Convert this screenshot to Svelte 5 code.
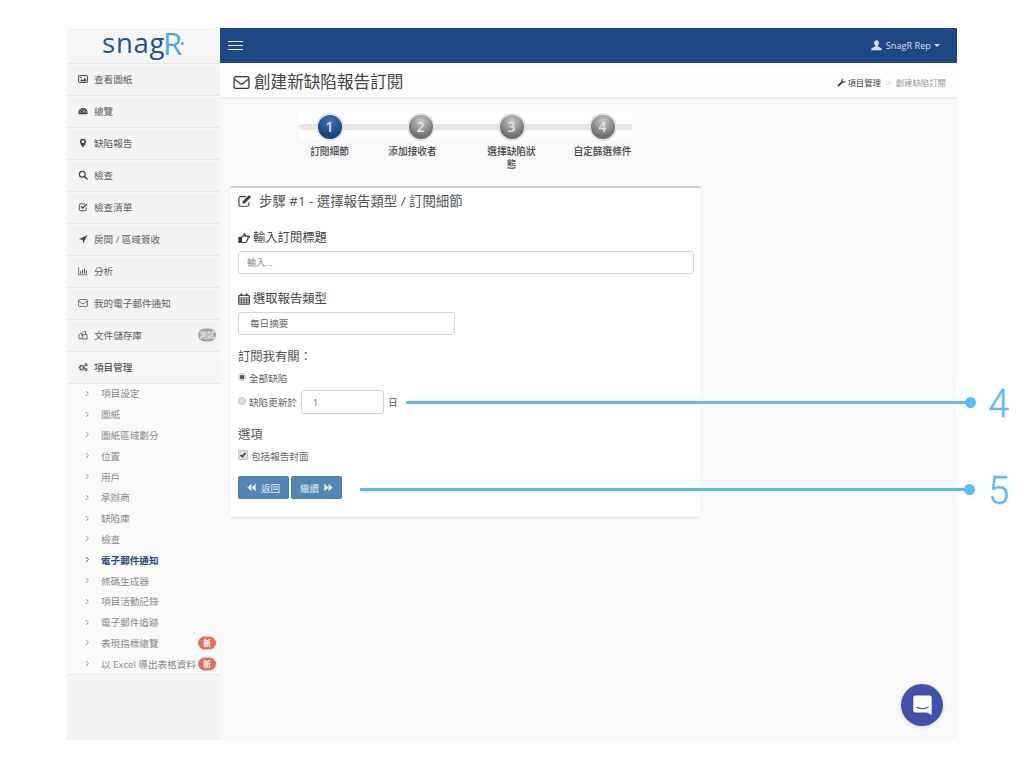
<script>
  const main = [
    { label: '查看圖紙', icon: 'image' },
    { label: '總覽', icon: 'gauge' },
    { label: '缺陷報告', icon: 'pin' },
    { label: '檢查', icon: 'search' },
    { label: '檢查清單', icon: 'check' },
    { label: '房間 / 區域簽收', icon: 'arrow' },
    { label: '分析', icon: 'chart' },
    { label: '我的電子郵件通知', icon: 'mail' },
    { label: '文件儲存庫', icon: 'files', beta: true },
    { label: '項目管理', icon: 'gears', dark: true }
  ];
  const sub = [
    { label: '項目設定' }, { label: '圖紙' }, { label: '圖紙區域劃分' }, { label: '位置' },
    { label: '用戶' }, { label: '承辦商' }, { label: '缺陷庫' }, { label: '檢查' },
    { label: '電子郵件通知', active: true }, { label: '條碼生成器' }, { label: '項目活動記錄' },
    { label: '電子郵件追跡' }, { label: '表現指標總覽', isNew: true }, { label: '以 Excel 導出表格資料', isNew: true }
  ];
  const steps = ['訂閱細節', '添加接收者', '選擇缺陷狀態', '自定篩選條件'];
</script>

{#snippet icon(name)}
  <svg class="ic" viewBox="0 0 16 16" aria-hidden="true">
    {#if name === 'image'}
      <rect x="1" y="2.500" width="14" height="11" rx="1" fill="none" stroke="currentColor" stroke-width="1.600"/>
      <path d="M3 11.500 6 8l2 2 3-3.500 2.200 2.200v2.800z" fill="currentColor"/><circle cx="4.600" cy="5.600" r="1.300" fill="currentColor"/>
    {:else if name === 'gauge'}
      <path d="M8 3a7.400 7.400 0 0 0-7.400 7.400c0 1 .2 1.900.6 2.600h13.600c.4-.7.6-1.600.6-2.600A7.400 7.400 0 0 0 8 3z" fill="currentColor"/>
      <path d="M8 11 10.500 6" stroke="#f5f5f5" stroke-width="1.400"/><circle cx="3.500" cy="9.500" r="1" fill="#f5f5f5"/><circle cx="6" cy="6" r="1" fill="#f5f5f5"/><circle cx="12.700" cy="9.500" r="1" fill="#f5f5f5"/>
    {:else if name === 'pin'}
      <path d="M8 1a4.800 4.800 0 0 0-4.800 4.800C3.200 9 8 15 8 15s4.800-6 4.800-9.200A4.800 4.800 0 0 0 8 1z" fill="currentColor"/><circle cx="8" cy="5.800" r="2.200" fill="#f5f5f5"/>
    {:else if name === 'search'}
      <circle cx="6.800" cy="6.800" r="4.600" fill="none" stroke="currentColor" stroke-width="2"/><path d="m10.300 10.300 4.200 4.200" stroke="currentColor" stroke-width="2.400" stroke-linecap="round"/>
    {:else if name === 'check'}
      <path d="M13 9v3a2 2 0 0 1-2 2H4a2 2 0 0 1-2-2V5a2 2 0 0 1 2-2h7" fill="none" stroke="currentColor" stroke-width="1.500"/><path d="m4.800 7 2.700 2.700L14.500 3" fill="none" stroke="currentColor" stroke-width="2"/>
    {:else if name === 'arrow'}
      <path d="M15 1.500 1.500 8.500l6 .5.800 6z" fill="currentColor"/>
    {:else if name === 'chart'}
      <path d="M1 2v12h14" fill="none" stroke="currentColor" stroke-width="1.100"/><path d="M3.500 8.500h1.500V12H3.500zM6.500 6h1.500v6H6.500zM9.500 4h1.500v8H9.500zM12.500 7h1.500v5h-1.500z" fill="currentColor"/>
    {:else if name === 'mail'}
      <rect x="1" y="2.500" width="14" height="11" rx="1.500" fill="none" stroke="currentColor" stroke-width="1.200"/><path d="m1.500 5 5 3.800q1.500 1 3 0l5-3.800" fill="none" stroke="currentColor" stroke-width="1.200"/>
    {:else if name === 'files'}
      <path d="M6 5.500 9 2.500h3v4M6 5.500v3h2M6 5.500H4L1.500 8v6H7" fill="none" stroke="currentColor" stroke-width="1.200"/><path d="M7.500 7h7v7.500h-7z" fill="none" stroke="currentColor" stroke-width="1.200"/>
    {:else if name === 'gears'}
      <circle cx="6" cy="9" r="3.300" fill="none" stroke="currentColor" stroke-width="3" stroke-dasharray="2 .8"/><circle cx="12.800" cy="4.500" r="1.800" fill="none" stroke="currentColor" stroke-width="1.600"/><circle cx="12.800" cy="12.200" r="1.800" fill="none" stroke="currentColor" stroke-width="1.600"/>
    {:else if name === 'edit'}
      <path d="M12.500 9.500V12a2 2 0 0 1-2 2H3a2 2 0 0 1-2-2V5a2 2 0 0 1 2-2h6" fill="none" stroke="currentColor" stroke-width="1.300"/><path d="m5.500 8 7-7 2.500 2.500-7 7-3.200.7z" fill="currentColor"/>
    {:else if name === 'hand'}
      <path d="M4.500 7 8 4.500V2.500c1.800-.4 2.200 1.300 1.500 3h4.500c1.600 0 1.600 2.400 0 2.500h-1c.6 1.200 0 2.200-.6 2.300.2 1.100-.2 1.800-.8 2 0 1-.6 1.700-1.600 1.700H7.500c-1 0-1.800-.6-3-.8z" fill="none" stroke="currentColor" stroke-width="1.400"/><rect x=".5" y="6.500" width="4" height="8" fill="currentColor"/>
    {:else if name === 'calendar'}
      <rect x="1" y="3" width="14" height="12" rx="1" fill="none" stroke="currentColor" stroke-width="1.400"/><path d="M1 6.500h14M1 9.300h14M1 12.200h14M4.500 6.500v8M8 6.500v8M11.500 6.500v8" stroke="currentColor" stroke-width="1"/><path d="M4.500 .5v3.500M11.500 .5v3.500" stroke="currentColor" stroke-width="2"/>
    {:else if name === 'user'}
      <path d="M8 .5c-2.200 0-3.500 1.700-3.500 3.800 0 1.500.6 2.900 1.700 3.700v1.200L.5 12.300V15h15v-2.700L9.800 9.200V8c1.100-.8 1.700-2.200 1.700-3.700C11.500 2.200 10.200.5 8 .5z" fill="currentColor"/>
    {:else if name === 'wrench'}
      <path d="M15 4.300a4 4 0 0 1-5.300 4.200L3.800 14.500a1.500 1.500 0 0 1-2.200-2.200l6-6A4 4 0 0 1 11.800 1L9.500 3.300 10 6l2.700.5z" fill="currentColor"/>
    {:else if name === 'back'}
      <path d="M8 1.500v13L.5 8zM15.500 1.500v13L8 8z" fill="currentColor"/>
    {:else if name === 'next'}
      <path d="M.5 1.500v13L8 8zM8 1.500v13L15.500 8z" fill="currentColor"/>
    {/if}
  </svg>
{/snippet}

<div class="page">
  <div class="frame">
    <aside class="side">
      <div class="logo"><span class="snag">snag</span><span class="r">R</span><i class="rdot"></i></div>
      {#each main as m}
        <div class="item" class:dark={m.dark}>
          <span class="item-ic">{@render icon(m.icon)}</span>
          <span>{m.label}</span>
          {#if m.beta}<span class="pill beta">測試</span>{/if}
        </div>
      {/each}
      <div class="subs">
        {#each sub as s}
          <div class="sub" class:active={s.active}>
            <svg class="chev" viewBox="0 0 6 8"><path d="m1.200 1 3 3-3 3" fill="none" stroke="currentColor" stroke-width="1"/></svg>
            <span>{s.label}</span>
            {#if s.isNew}<span class="pill new">新</span>{/if}
          </div>
        {/each}
      </div>
    </aside>

    <div class="right">
      <header class="top">
        <div class="burger"><i></i><i></i><i></i></div>
        <div class="user">
          <span class="user-ic">{@render icon('user')}</span>
          <span>SnagR Rep</span>
          <i class="caret"></i>
        </div>
      </header>
      <div class="titlebar">
        <h1><span class="h1-ic">{@render icon('mail')}</span>創建新缺陷報告訂閱</h1>
        <div class="crumbs">
          <span class="wr">{@render icon('wrench')}</span><span class="c1">項目管理</span><span class="sep">&gt;</span><span class="c2">創建缺陷訂閱</span>
        </div>
      </div>
      <main class="content">
        <div class="wizard">
          <div class="track"></div>
          <div class="steps">
            {#each steps as s, i}
              <div class="step">
                <div class="ball" class:on={i === 0}>{i + 1}</div>
                <div class="step-label">{s}</div>
              </div>
            {/each}
          </div>
        </div>

        <section class="card">
          <h2><span class="h2-ic">{@render icon('edit')}</span>步驟 #1 - 選擇報告類型 / 訂閱細節</h2>
          <div class="lab first"><span class="lab-ic">{@render icon('hand')}</span>輸入訂閱標題</div>
          <input class="ctl full" placeholder="輸入..." />
          <div class="lab second"><span class="lab-ic">{@render icon('calendar')}</span>選取報告類型</div>
          <div class="ctl sel">每日摘要</div>
          <div class="lab third">訂閱我有關：</div>
          <div class="opt o1"><i class="radio on"></i>全部缺陷</div>
          <div class="opt o2"><i class="radio"></i>缺陷更新於<span class="ctl num">1</span><span class="unit">日</span></div>
          <div class="lab fourth">選項</div>
          <div class="opt o3"><i class="cb"><svg viewBox="0 0 10 10"><path d="m2 5 2.200 2.200L8 2.500" fill="none" stroke="#333" stroke-width="1.800"/></svg></i>包括報告封面</div>
          <div class="btns">
            <button class="btn b1"><span class="bi">{@render icon('back')}</span>返回</button>
            <button class="btn b2">繼續<span class="bi">{@render icon('next')}</span></button>
          </div>
        </section>
      </main>
    </div>
  </div>

  <div class="callout c4"><i class="line"></i><i class="dot"></i></div>
  <div class="num-label n4">4</div>
  <div class="callout c5"><i class="line"></i><i class="dot"></i></div>
  <div class="num-label n5">5</div>

  <div class="chat">
    <svg viewBox="0 0 24 24" width="21" height="24"><path d="M4 1h16a2.500 2.500 0 0 1 2.500 2.500V23l-5.500-2.500H4A2.500 2.500 0 0 1 1.500 18V3.500A2.500 2.500 0 0 1 4 1z" fill="#fff"/><path d="M5.500 14.500q6.500 3.500 13 0" fill="none" stroke="#3f51a8" stroke-width="1.300" stroke-linecap="round"/></svg>
  </div>
</div>

<style>
  :global(body) { margin: 0; background: #fff; }
  .page {
    position: relative; width: 1024px; height: 768px; box-sizing: border-box; padding: 28px 67px;
    overflow: hidden; font-family: "Open Sans", "Noto Sans CJK TC", sans-serif; color: #555;
  }
  .frame { display: flex; width: 890px; height: 712px; background: #f9f9f9; }
  .side { width: 153px; flex: none; background: #f4f4f4; box-sizing: border-box; }
  .logo { height: 36px; box-sizing: border-box; display: flex; justify-content: center; align-items: center; border-bottom: 1px solid #e6e6e6; background: #f6f6f6; font-family: "Open Sans", sans-serif; font-size: 27.500px; line-height: 30px; letter-spacing: .7px; padding-bottom: 5px; padding-right: 1px; }
  .snag { color: #23528f; }
  .r { color: #53a9dd; font-size: 31px; margin-left: -2px; }
  .rdot { width: 3px; height: 3px; background: #53a9dd; border-radius: 50%; margin-top: 1px; margin-left: -2px; }
  .item { height: 32px; box-sizing: border-box; display: flex; align-items: center; padding: 0 0 3px 11px; font-size: 9.600px; color: #5f5f5f; border-bottom: 1px solid #e6e6e6; border-top: 1px solid #fbfbfb; position: relative; }
  .item.dark { color: #333; background: #f6f6f6; }
  .item-ic { width: 10px; height: 10px; margin-right: 6px; display: flex; color: #444; }
  .ic { width: 100%; height: 100%; display: block; }
  .pill { position: absolute; right: 4px; top: calc(50% - 1px); transform: translateY(-50%); height: 13px; width: 18px; border-radius: 7px; color: #fff; font-size: 7.500px; line-height: 13px; text-align: center; }
  .sub .pill { top: 50%; }
  .beta { background: #a3a3a3; }
  .new { background: #e2705d; font-weight: 700; }
  .subs { background: #fafafa; border-bottom: 1px solid #e6e6e6; margin-top: -1px; }
  .sub { height: 20.800px; display: flex; align-items: center; position: relative; padding-left: 18px; font-size: 9.600px; color: #8a8a8a; }
  .sub.active { color: #1e4785; font-weight: 700; }
  .chev { width: 5px; height: 7px; margin-right: 11px; color: #888; flex: none; }
  .active .chev { color: #1e4785; }
  .right { flex: 1; min-width: 0; display: flex; flex-direction: column; }
  .top { height: 35px; flex: none; background: #1e4785; display: flex; align-items: center; justify-content: space-between; padding: 0 17px 0 8px; color: #d6deea; }
  .burger { width: 15px; display: flex; flex-direction: column; gap: 3px; }
  .burger i { display: block; height: 1.300px; background: #e4eaf3; }
  .user { display: flex; align-items: center; font-size: 9.200px; color: #d6deea; }
  .user-ic { width: 11px; height: 11px; margin-right: 4px; display: flex; }
  .caret { width: 0; height: 0; border: 3px solid transparent; border-top-color: #d6deea; border-bottom: 0; margin-left: 3px; }
  .titlebar { height: 36px; flex: none; box-sizing: border-box; background: #fdfdfd; border-bottom: 2px solid #ececec; display: flex; align-items: center; justify-content: space-between; padding: 4px 11px 0 13px; }
  h1 { margin: 0; font-size: 16.600px; font-weight: 400; color: #444; display: flex; align-items: center; line-height: 1; }
  .h1-ic { width: 17px; height: 17px; margin-right: 4px; display: flex; color: #333; }
  .crumbs { display: flex; align-items: center; font-size: 8.400px; }
  .wr { width: 9px; height: 9px; display: flex; margin-right: 1px; color: #333; }
  .c1 { color: #444; }
  .sep { color: #ccc; margin: 0 5px 0 5px; }
  .c2 { color: #999; }
  .content { flex: 1; min-height: 0; padding: 13px 0 0 10px; }
  .wizard { position: relative; margin-left: 69px; width: 333px; height: 74px; }
  .wizard::before { content: ""; position: absolute; left: 0; top: 0; width: 333px; height: 28px; background: #fff; }
  .track { position: absolute; left: 0; top: 12px; width: 333px; height: 6px; background: #e6e6e6; border-radius: 3px 0 0 3px; }
  .steps { position: absolute; left: -15px; top: 1px; display: grid; grid-template-columns: repeat(4, 91px); }
  .step { display: flex; flex-direction: column; align-items: center; }
  .ball { width: 24px; height: 24px; border-radius: 50%; border: 2px solid #e4e4e4; background: radial-gradient(circle at 50% 25%, #c8c8c8, #6f6f6f 70%); color: #e4e4e4; font-size: 14px; font-weight: 600; line-height: 24px; text-align: center; }
  .ball.on { background: radial-gradient(circle at 50% 25%, #3a76b8, #17427f 70%); color: #dce6f2; }
  .step-label { width: 60px; margin-top: 4px; text-align: center; font-size: 9.700px; line-height: 13px; color: #444; font-weight: 500; }
  .step:nth-child(2) .step-label { margin-right: 16px; }
  .step:nth-child(3) .step-label { width: 50px; }
  .card { width: 471px; height: 331px; box-sizing: border-box; background: #fff; border-top: 2px solid #d0d0d0; border-radius: 3px; box-shadow: 0 1px 2px rgba(0,0,0,.1); padding: 6px 7px 0 8px; }
  h2 { margin: 0; font-size: 13.400px; font-weight: 400; line-height: 14px; color: #555; display: flex; align-items: center; }
  .h2-ic { width: 14px; height: 14px; margin-right: 7px; display: flex; color: #444; }
  .lab { font-size: 12.300px; line-height: 14px; color: #444; display: flex; align-items: center; }
  .lab-ic { width: 12px; height: 12px; margin-right: 3px; display: flex; color: #333; }
  .first { margin-top: 23px; }
  .ctl { display: block; box-sizing: border-box; height: 23px; background: #fff; border: 1px solid #d4d4d4; border-radius: 3px; font: inherit; font-size: 9.200px; color: #666; line-height: 21px; }
  .full { width: 456px; margin-top: 6px; padding: 0 8px; outline: none; }
  .full::placeholder { color: #888; opacity: 1; }
  .second { margin-top: 18px; }
  .sel { width: 217px; margin-top: 6px; padding: 0 11px; font-size: 9.600px; }
  .third { margin-top: 15px; color: #555; }
  .opt { display: flex; align-items: center; font-size: 9.600px; color: #666; height: 14px; }
  .o1 { margin-top: 7px; }
  .o2 { margin-top: 5px; height: 24px; }
  .radio { width: 8px; height: 8px; box-sizing: border-box; border-radius: 50%; border: 1px solid #c4c4c4; background: #dedede; margin-right: 3px; position: relative; top: -1px; }
  .radio.on { background: radial-gradient(circle, #555 0 2px, #e8e8e8 2.500px); }
  .num { display: inline-block; width: 83px; height: 24px; line-height: 24px; margin-left: 4px; padding-left: 11px; font-size: 9px; border-color: #d4d4d4; }
  .unit { margin-left: 4px; color: #555; }
  .fourth { margin-top: 14px; color: #555; }
  .o3 { margin-top: 7px; }
  .cb { width: 8px; height: 8px; background: #dedede; border: .5px solid #c4c4c4; border-radius: 1px; margin-right: 3px; display: flex; position: relative; top: -1px; }
  .cb svg { width: 100%; height: 100%; }
  .btns { display: flex; gap: 2px; margin-top: 13px; }
  .btn { height: 23px; box-sizing: border-box; background: #5286b5; border: 1px solid #4a7dac; border-radius: 2px; color: #e4edf5; font: inherit; font-size: 9.600px; display: flex; align-items: center; justify-content: center; padding: 0; }
  .b1 { width: 51px; }
  .b2 { width: 51px; }
  .bi { width: 9px; height: 9px; display: flex; }
  .b1 .bi { margin-right: 5px; }
  .b2 .bi { margin-left: 5px; }
  .callout { position: absolute; height: 3px; }
  .c4 { left: 406px; width: 564px; top: 400.500px; }
  .c5 { left: 360px; width: 609px; top: 487.500px; }
  .line { position: absolute; inset: 0; background: #5dbcf2; }
  .dot { position: absolute; right: -5.500px; top: -4px; width: 11px; height: 11px; border-radius: 50%; background: #5dbcf2; }
  .num-label { position: absolute; left: 988px; font-family: Roboto, sans-serif; font-weight: 300; font-size: 38px; line-height: 38px; color: #5dbcf2; -webkit-text-stroke: .4px #5dbcf2; }
  .n4 { top: 385px; }
  .n5 { top: 472px; }
  .chat { position: absolute; left: 901px; top: 684px; width: 42px; height: 42px; border-radius: 50%; background: #3f51a8; display: flex; align-items: center; justify-content: center; box-shadow: 0 1px 4px rgba(0,0,0,.15); }
</style>
